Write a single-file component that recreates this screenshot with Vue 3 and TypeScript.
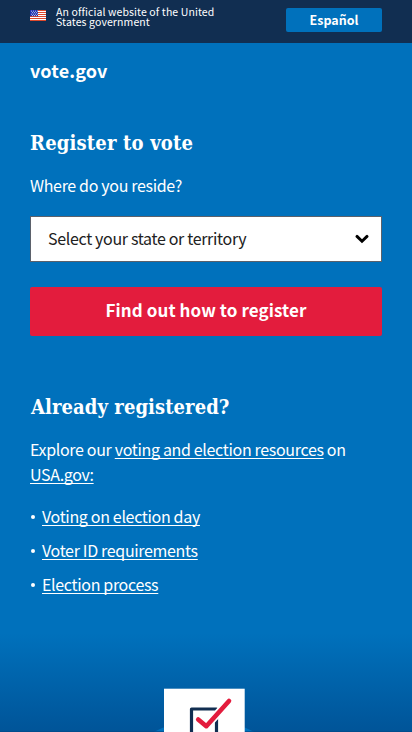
<script setup lang="ts">
interface ResourceLink {
  key: string
  label: string
}

const resources: ResourceLink[] = [
  { key: 'day', label: 'Voting on election day' },
  { key: 'id', label: 'Voter ID requirements' },
  { key: 'process', label: 'Election process' },
]
</script>

<template>
  <div class="page">
    <header class="banner">
      <svg class="flag" viewBox="0 0 16 11" width="16" height="11" aria-hidden="true">
        <rect width="16" height="11" fill="#fff" />
        <path d="M0 .5h16M0 2.5h16M0 4.5h16M0 6.5h16M0 8.5h16M0 10.5h16" stroke="#db3e1f" stroke-width=".95" />
        <rect width="8" height="6.2" fill="#1e33b1" />
        <path d="M1 1.2h7M2 2.7h6M1 4.2h7M2 5.5h6" stroke="#fff" stroke-width=".8" stroke-dasharray=".9 1.1" />
      </svg>
      <p class="official">An official website of the United<br />States government</p>
      <a class="language" href="#">Español</a>
    </header>

    <main class="content">
      <a class="logo" href="#">vote.gov</a>

      <section class="register">
        <h1 class="heading">Register to vote</h1>
        <p class="question">Where do you reside?</p>
        <div class="select" role="combobox" aria-expanded="false">
          <span class="select-label">Select your state or territory</span>
          <svg class="chevron" viewBox="0 0 14 10" width="14" height="10" aria-hidden="true">
            <path d="M2 2.4 7 7.2 12 2.4" fill="none" stroke="#000" stroke-width="2.9" stroke-linecap="round" />
          </svg>
        </div>
        <button class="submit" type="button">Find out how to register</button>
      </section>

      <section class="registered">
        <h2 class="heading already">Already registered?</h2>
        <p class="explore">
          Explore our <a href="#">voting and election resources</a> on<br /><a href="#">USA.gov:</a>
        </p>
        <ul class="links">
          <li v-for="item in resources" :key="item.key"><a href="#">{{ item.label }}</a></li>
        </ul>
      </section>
    </main>

    <div class="scene">
      <svg class="ballot" viewBox="0 0 412 112" width="412" height="112" aria-hidden="true">
        <ellipse cx="204" cy="151" rx="78" ry="51" fill="#0071bc" />
        <rect y="111.3" width="412" height=".7" fill="#004b88" />
        <rect x="164" y="68.7" width="80.7" height="44" fill="#fff" />
        <path d="M191.5 115V89h25v26" fill="none" stroke="#112e51" stroke-width="3.2" stroke-linejoin="round" />
        <path d="M198.2 100 206.3 106.2 229 81" fill="none" stroke="#fff" stroke-width="8" />
        <path d="M198.2 99.4 206.3 106.2 229 81" fill="none" stroke="#e31c3d" stroke-width="4.6" stroke-linecap="round" stroke-linejoin="round" />
      </svg>
    </div>
  </div>
</template>

<style>
body {
  margin: 0;
  background: #0071bc;
}
</style>

<style scoped>
.page {
  display: flex;
  flex-direction: column;
  box-sizing: border-box;
  height: 732px;
  overflow: hidden;
  background: #0071bc;
  color: #fff;
  font-family: "Noto Sans CJK SC", "Noto Sans", sans-serif;
  font-size: 16px;
}

p, h1, h2, ul {
  margin: 0;
}

a {
  color: inherit;
  text-decoration-skip-ink: none;
  text-decoration-thickness: 1px;
  text-underline-offset: 2px;
}

.banner {
  display: flex;
  align-items: flex-start;
  flex: none;
  box-sizing: border-box;
  height: 43px;
  padding: 8px 30px 0;
  background: #112e51;
}

.flag {
  flex: none;
  margin-top: 2px;
}

.official {
  margin: -1px 0 0 10px;
  font-size: 10.5px;
  letter-spacing: 0.11px;
  line-height: 10px;
  white-space: nowrap;
}

.language {
  width: 96px;
  height: 24px;
  margin-left: auto;
  border-radius: 2px;
  background: #0071bc;
  font-size: 12.5px;
  font-weight: 700;
  line-height: 24px;
  text-align: center;
  text-decoration: none;
}

.content {
  display: flex;
  flex-direction: column;
  flex: none;
  height: 577px;
  padding: 0 30px;
}

.logo {
  height: 30px;
  margin-top: 12px;
  font-size: 18px;
  font-weight: 700;
  letter-spacing: 0.15px;
  line-height: 30px;
  text-decoration: none;
}

.register {
  margin-top: 43px;
}

.heading {
  height: 30px;
  font-family: "DejaVu Serif Condensed", "DejaVu Serif", serif;
  font-size: 20px;
  font-stretch: condensed;
  font-weight: 700;
  letter-spacing: 0.18px;
  line-height: 30px;
  white-space: nowrap;
}

.already {
  padding-left: 1px;
  letter-spacing: 0.08px;
}

.question,
.select,
.explore,
.links {
  letter-spacing: -0.33px;
}

.question {
  margin-top: 15px;
  line-height: 24px;
}

.select {
  display: flex;
  align-items: center;
  justify-content: space-between;
  box-sizing: border-box;
  height: 46px;
  margin-top: 19px;
  padding: 0 12.5px 0 17px;
  border: 1px solid #5b616b;
  background: #fff;
  color: #212121;
}

.select-label {
  padding-bottom: 2px;
}

.submit {
  display: block;
  width: 352px;
  height: 49px;
  margin-top: 25px;
  padding: 0 0 3px;
  border: 0;
  border-radius: 2px;
  background: #e31c3d;
  color: #fff;
  font-family: inherit;
  font-size: 17px;
  font-weight: 700;
  letter-spacing: 0.08px;
  line-height: 46px;
}

.registered {
  margin-top: 56px;
}

.explore {
  margin-top: 15px;
  line-height: 25px;
  white-space: nowrap;
}

.links {
  display: grid;
  grid-auto-rows: 34px;
  margin-top: 12px;
  padding: 0;
  list-style: none;
}

.links li {
  display: flex;
  align-items: center;
  line-height: 34px;
}

.links li::before {
  width: 4px;
  height: 4px;
  margin: 2px 7px 0 1px;
  border-radius: 50%;
  background: #fff;
  content: "";
}

.scene {
  flex: none;
  height: 112px;
  background: linear-gradient(#0071bc, #0071bc 12%, #005498);
}

.ballot {
  display: block;
}
</style>
